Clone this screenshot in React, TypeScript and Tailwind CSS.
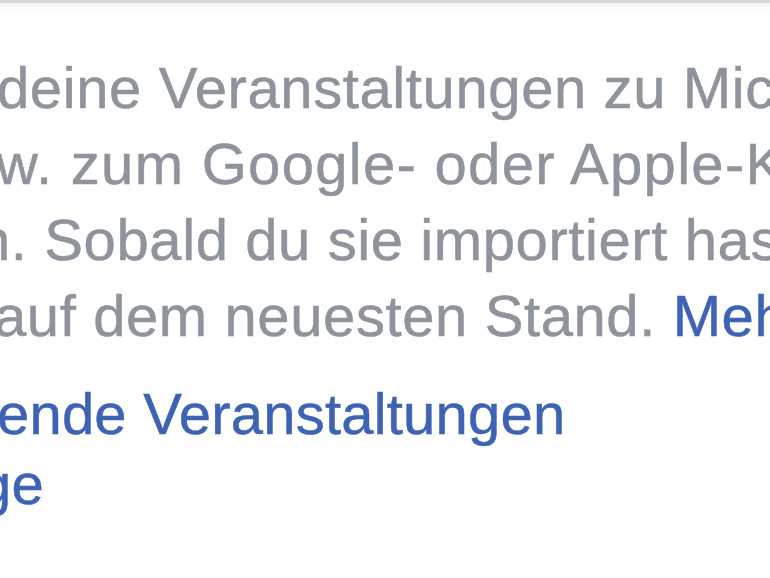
import React from "react";

const gray = "text-[#8f939b]";

export default function App() {
  return (
    <div className="w-[770px] h-[578px] overflow-hidden bg-white font-['Liberation_Sans',Arial,sans-serif] [-webkit-text-stroke:0.5px_currentColor]">
      <div className="h-[3px] bg-[#d9d9d9]" />
      <div className="h-[8px] bg-gradient-to-b from-[#f3f3f3] to-white" />
      <div className="pt-[39px] text-[58px] leading-[76px] whitespace-nowrap">
        <div className={`${gray} tracking-[0.6px] ml-[-3px]`}>deine Veranstaltungen zu Microsoft</div>
        <div className={`${gray} tracking-[1.3px] ml-[-4px]`}>w. zum Google- oder Apple-Kalender</div>
        <div className={`${gray} tracking-[0.6px] ml-[-22px]`}>n. Sobald du sie importiert hast,</div>
        <div className={`${gray} tracking-[0.6px] ml-[-6px]`}>
          auf dem neuesten Stand. <span className="text-[#3f63b4]">Mehr dazu</span>
        </div>
        <div className="mt-[25px] leading-[70px] text-[#3f63b4] tracking-[0.2px]">
          <div className="ml-[-3px]">ende Veranstaltungen</div>
          <div className="ml-[-21px]">ge</div>
        </div>
      </div>
    </div>
  );
}
